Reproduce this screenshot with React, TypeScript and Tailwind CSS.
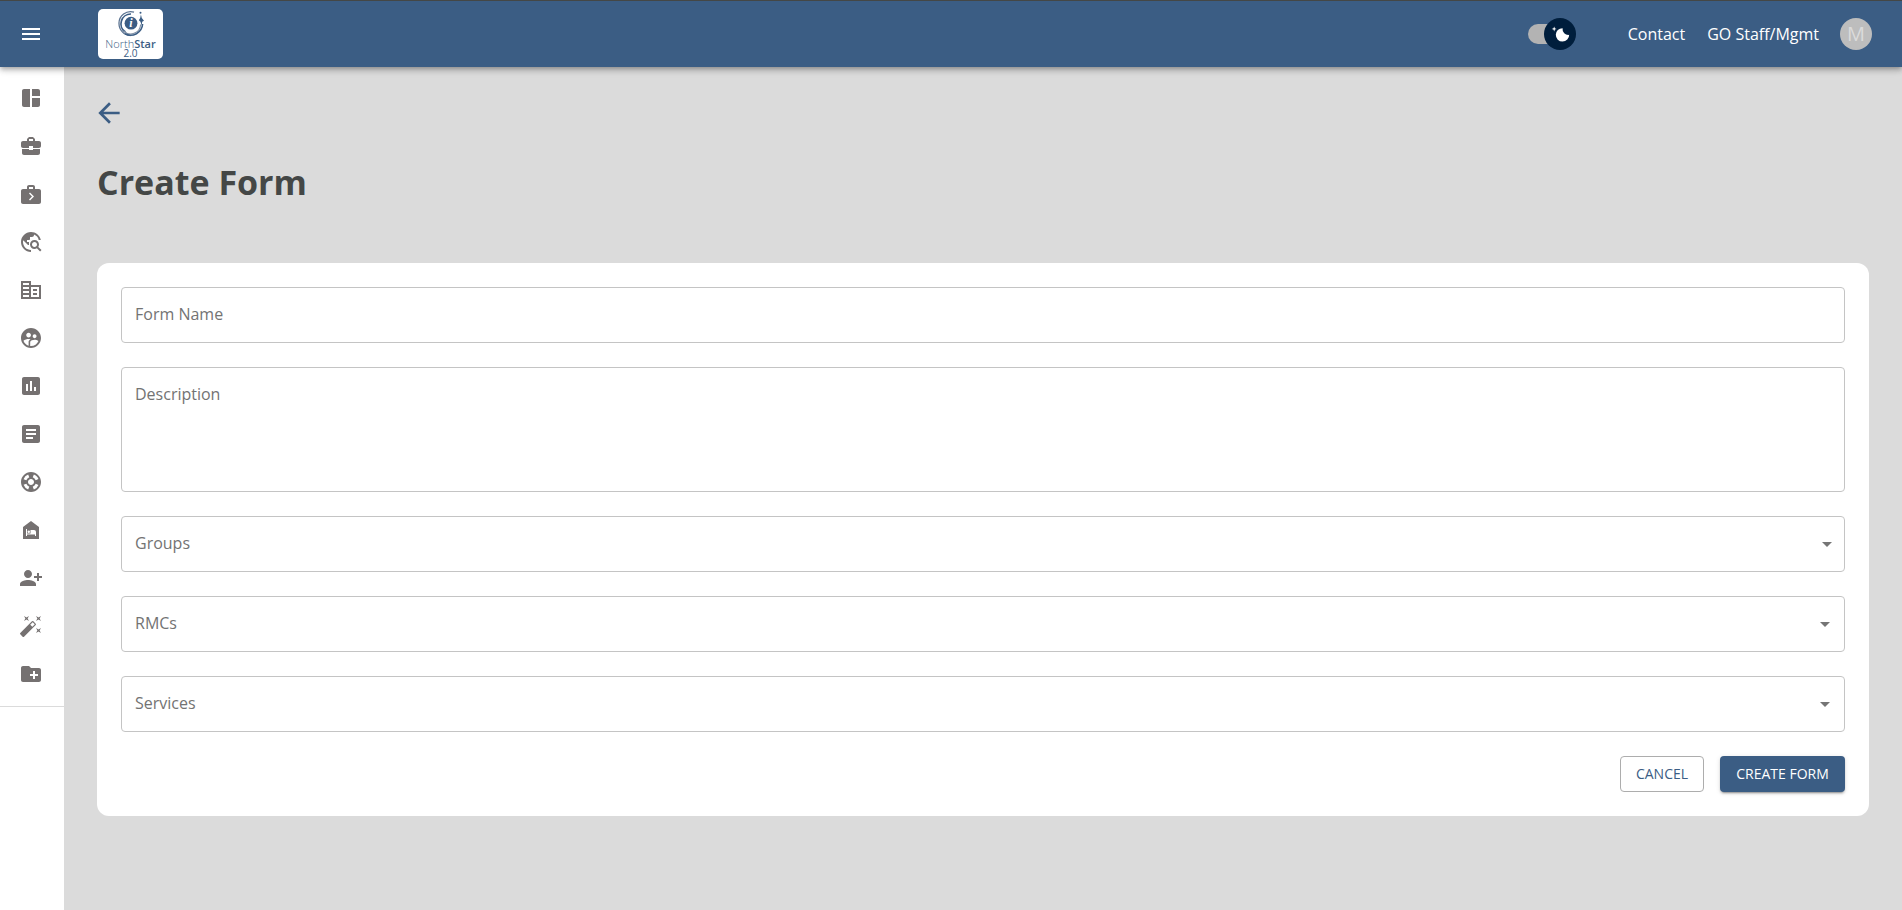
import { useState } from "react"
import {
  MdArrowBack,
  MdArrowDropDown,
  MdArticle,
  MdAssessment,
  MdAutoFixHigh,
  MdBusinessCenter,
  MdCorporateFare,
  MdCreateNewFolder,
  MdMenu,
  MdNextWeek,
  MdNightShelter,
  MdPersonAddAlt1,
  MdSpaceDashboard,
  MdSupervisedUserCircle,
  MdSupport,
  MdTravelExplore,
} from "react-icons/md"
import { clsx } from "clsx"

const navItems = [
  { label: "Dashboard", icon: MdSpaceDashboard },
  { label: "Cases", icon: MdBusinessCenter },
  { label: "Referrals", icon: MdNextWeek },
  { label: "Search", icon: MdTravelExplore },
  { label: "Organizations", icon: MdCorporateFare },
  { label: "Users", icon: MdSupervisedUserCircle },
  { label: "Reports", icon: MdAssessment },
  { label: "Articles", icon: MdArticle },
  { label: "Support", icon: MdSupport },
  { label: "Shelters", icon: MdNightShelter },
  { label: "Add user", icon: MdPersonAddAlt1 },
  { label: "Form builder", icon: MdAutoFixHigh },
  { label: "New folder", icon: MdCreateNewFolder },
]

const selects = [
  { id: "groups", label: "Groups", edge: "right-[6px]" },
  { id: "rmcs", label: "RMCs", edge: "right-2" },
  { id: "services", label: "Services", edge: "right-2" },
]

const fieldClass =
  "block w-full rounded border border-[#c4c4c4] bg-white px-[14px] text-base text-[#444746] outline-none focus:border-[#3b5d84]"
const labelClass =
  "pointer-events-none absolute left-[14px] top-4 text-base leading-[23px] text-[#737373]"

function Logo() {
  return (
    <a
      href="#home"
      className="flex h-[50px] w-[65px] flex-col items-center rounded-[5px] bg-white pt-px text-[#3b5d84]"
    >
      <svg width="28" height="27" viewBox="0 0 28 27" fill="none" className="shrink-0">
        <path d="M17 2.1A11.6 11.6 0 0 0 2 13.5C2 20 7 25.4 13.6 25.6" stroke="#5b7391" strokeWidth="1.3" />
        <path d="M14 4A9.8 9.8 0 0 0 8.4 22" stroke="#3b5d84" strokeWidth="1.7" />
        <path d="M6.5 20.6A9.8 9.8 0 0 0 23.6 14.5" stroke="#7d8da3" strokeWidth="1.1" />
        <path d="M8 23.8A12 12 0 0 0 25.6 14" stroke="#3b5d84" strokeWidth="1.6" />
        <circle cx="14" cy="13.2" r="6.4" fill="#3b5d84" />
        <text
          x="14"
          y="17"
          textAnchor="middle"
          fill="#fff"
          className="font-['Liberation_Serif',serif] text-[12px] font-bold italic"
        >
          i
        </text>
        <circle cx="23.5" cy="2.8" r="1" fill="#3b5d84" />
        <path d="M23.9 4.5l.9 3.6 2.2 2.6-1.8 1-.6 3.8-1.1-3.8-1.7-1.4 1.4-2.2z" fill="#3b5d84" />
      </svg>
      <span className="mt-0.5 text-center text-[11px] leading-[9px]">
        <span className="font-light">North</span>
        <span className="font-semibold">Star</span>
        <br />
        <span className="text-[10px]">2.0</span>
      </span>
    </a>
  )
}

function ThemeSwitch() {
  const [dark, setDark] = useState(true)

  return (
    <label className="relative flex h-8 w-12 cursor-pointer items-center">
      <input
        type="checkbox"
        aria-label="Dark mode"
        checked={dark}
        onChange={(e) => setDark(e.target.checked)}
        className="h-5 w-10 cursor-pointer appearance-none rounded-full bg-[#b3b3b3]"
      />
      <span
        className={clsx(
          "pointer-events-none absolute top-0 flex size-8 items-center justify-center rounded-full bg-[#001e3c]",
          dark ? "left-4" : "left-0",
        )}
      >
        <svg width="20" height="20" viewBox="0 0 20 20" fill="#fff">
          <path d="M4.2 2.5l-.7 1.8-1.8.7 1.8.6.7 1.8.6-1.8 1.8-.6-1.8-.7-.6-1.8zm15 8.3a6.7 6.7 0 11-6.6-6.6 5.8 5.8 0 006.6 6.6z" />
        </svg>
      </span>
    </label>
  )
}

export default function App() {
  return (
    <div className="flex min-h-screen flex-col bg-[#dbdbdb] font-['Open_Sans',sans-serif]">
      <header className="z-10 flex h-[67px] items-center border-t border-[#444746] bg-[#3b5d84] pl-[19px] pr-[30px] text-white shadow-[0_2px_4px_-1px_rgba(0,0,0,0.2),0_4px_5px_rgba(0,0,0,0.14),0_1px_10px_rgba(0,0,0,0.12)]">
        <button type="button" aria-label="Open menu" className="mr-[55px]">
          <MdMenu className="size-6" />
        </button>
        <Logo />
        <div className="ml-auto flex items-center">
          <ThemeSwitch />
          <nav className="ml-[52px] mr-[21px] flex gap-[22px]">
            <a href="#contact">Contact</a>
            <a href="#staff">GO Staff/Mgmt</a>
          </nav>
          <button
            type="button"
            aria-label="Account"
            className="size-8 rounded-full bg-[#bdbdbd] text-xl text-[#dbdbdb]"
          >
            M
          </button>
        </div>
      </header>

      <div className="flex flex-1">
        <aside className="w-16 shrink-0 bg-white">
          <nav className="border-b border-[#dbdbdb] pt-[7px] pb-2">
            {navItems.map(({ label, icon: Icon }) => (
              <a
                key={label}
                href="#nav"
                aria-label={label}
                className="flex h-12 items-center pl-[19px] text-[#757171]"
              >
                <Icon className="size-6" />
              </a>
            ))}
          </nav>
        </aside>

        <main className="min-w-0 flex-1 px-[33px] pt-[30px] pb-8">
          <a href="#back" aria-label="Back" className="-ml-1 flex w-fit text-[#3b5d84]">
            <MdArrowBack className="size-8" />
          </a>
          <h1 className="mt-8 text-[34px] leading-[42px] font-bold text-[#444746]">Create Form</h1>

          <form
            onSubmit={(e) => e.preventDefault()}
            className="mt-[60px] flex flex-col gap-6 rounded-xl bg-white p-6"
          >
            <div className="relative">
              <input id="name" type="text" className={clsx(fieldClass, "h-14")} />
              <label htmlFor="name" className={labelClass}>Form Name</label>
            </div>
            <div className="relative">
              <textarea id="description" className={clsx(fieldClass, "h-[125px] resize-none py-4")} />
              <label htmlFor="description" className={labelClass}>Description</label>
            </div>
            {selects.map(({ id, label, edge }) => (
              <div key={id} className="relative">
                <select id={id} className={clsx(fieldClass, "h-14 appearance-none")} />
                <label htmlFor={id} className={labelClass}>{label}</label>
                <MdArrowDropDown
                  className={clsx("pointer-events-none absolute top-4 size-6 text-[#757575]", edge)}
                />
              </div>
            ))}
            <div className="flex justify-end gap-4 text-sm">
              <button
                type="button"
                className="h-9 w-[84px] rounded border border-[#adadad] text-[#3b5d84]"
              >
                CANCEL
              </button>
              <button
                type="submit"
                className="h-9 w-[125px] rounded bg-[#3b5d84] text-white shadow-[0_3px_1px_-2px_rgba(0,0,0,0.2),0_2px_2px_rgba(0,0,0,0.14),0_1px_5px_rgba(0,0,0,0.12)]"
              >
                CREATE FORM
              </button>
            </div>
          </form>
        </main>
      </div>
    </div>
  )
}
